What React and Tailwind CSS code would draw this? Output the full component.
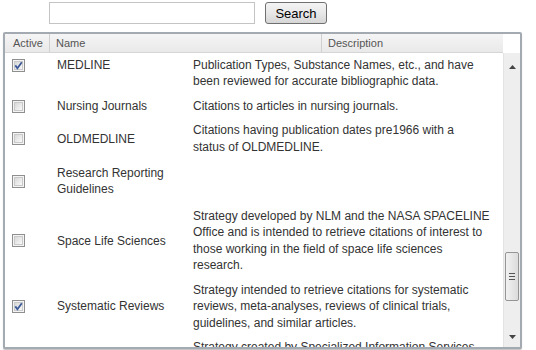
import React from "react";

const rows = [
  {
    name: ["MEDLINE"],
    checked: true,
    desc: [
      "Citations that have been indexed with MeSH",
      "Publication Types, Substance Names, etc., and have",
      "been reviewed for accurate bibliographic data.",
    ],
  },
  { name: ["Nursing Journals"], checked: false, desc: ["Citations to articles in nursing journals."] },
  {
    name: ["OLDMEDLINE"],
    checked: false,
    desc: ["Citations having publication dates pre1966 with a", "status of OLDMEDLINE."],
  },
  { name: ["Research Reporting", "Guidelines"], checked: false, desc: [], tall: true },
  {
    name: ["Space Life Sciences"],
    checked: false,
    desc: [
      "Strategy developed by NLM and the NASA SPACELINE",
      "Office and is intended to retrieve citations of interest to",
      "those working in the field of space life sciences",
      "research.",
    ],
  },
  {
    name: ["Systematic Reviews"],
    checked: true,
    desc: [
      "Strategy intended to retrieve citations for systematic",
      "reviews, meta-analyses, reviews of clinical trials,",
      "guidelines, and similar articles.",
    ],
  },
  {
    name: ["Toxicology"],
    checked: false,
    desc: [
      "Strategy created by Specialized Information Services",
      "to retrieve citations from the toxicology",
      "literature.",
    ],
  },
];

function Checkbox({ checked }) {
  return (
    <svg width="13" height="13" viewBox="0 0 13 13">
      <defs>
        <linearGradient id="cbg" x1="0" y1="0" x2="1" y2="1">
          <stop offset="0" stopColor="#d6d6d6" />
          <stop offset="1" stopColor="#fbfbfb" />
        </linearGradient>
      </defs>
      <rect x="0.5" y="0.5" width="12" height="12" fill="#f4f4f4" stroke="#8f8f8f" />
      <rect x="2.5" y="2.5" width="8" height="8" fill="url(#cbg)" stroke="#c9c9c9" />
      {checked && (
        <path d="M3.3 6.4 L5.4 9.2 L9.8 3.2" fill="none" stroke="#3d5a98" strokeWidth="1.8" />
      )}
    </svg>
  );
}

export default function App() {
  return (
    <div className="w-[536px] h-[350px] bg-white overflow-hidden font-['Liberation_Sans',Arial,sans-serif] text-[#333]">
      <div className="flex items-start pt-[2px] pl-[49px]">
        <div className="w-[206px] h-[22px] border border-[#c4c4c4] bg-white" />
        <button className="ml-[10px] w-[62px] h-[22px] rounded-[3px] border border-[#707070] bg-gradient-to-b from-[#f4f4f4] via-[#e8e8e8] to-[#d6d6d6] text-[13px] text-black leading-none">
          Search
        </button>
      </div>

      <div className="mt-[8px] ml-[3px] w-[519px] h-[317px] border-2 border-[#a4aab1] rounded-[2px] flex flex-col bg-white shadow-[0_1px_1px_rgba(0,0,0,0.25)]">
        <div className="flex h-[19px] shrink-0">
          <div className="w-[498px] flex bg-gradient-to-b from-[#f5f5f5] to-[#e9e9e9] border-b border-[#d5d5d5] text-[11px] text-[#555] leading-[18px]">
            <div className="w-[45px] pl-[8px] border-r border-[#d0d0d0]">Active</div>
            <div className="w-[272px] pl-[6px] border-r border-[#d0d0d0]">Name</div>
            <div className="flex-1 pl-[6px]">Description</div>
          </div>
          <div className="flex-1 bg-white" />
        </div>

        <div className="flex flex-1 min-h-0">
          <div className="w-[498px] overflow-hidden text-[12px] leading-[16.5px]">
            <div className="-mt-[16.75px]">
              {rows.map((r, i) => (
                <div
                  key={i}
                  className={`grid grid-cols-[45px_136px_1fr] items-center ${r.tall ? "pt-[5.5px] pb-[6px]" : "py-[4px]"}`}
                >
                  <div className="pl-[7px] flex items-center">
                    <Checkbox checked={r.checked} />
                  </div>
                  <div className="pl-[7px]">
                    {r.name.map((n, j) => (
                      <div key={j} className="whitespace-nowrap">{n}</div>
                    ))}
                  </div>
                  <div className="pl-[7px]">
                    {r.desc.map((d, j) => (
                      <div key={j} className="whitespace-nowrap">{d}</div>
                    ))}
                  </div>
                </div>
              ))}
            </div>
          </div>

          <div className="w-[17px] flex flex-col bg-[#eeeeee] border-l border-[#e3e3e3]">
            <div className="h-[18px] flex items-end justify-center pb-[2px]">
              <svg width="7" height="4" viewBox="0 0 7 4"><path d="M0 4 L3.5 0 L7 4 Z" fill="#444" /></svg>
            </div>
            <div className="flex-1 flex flex-col">
              <div className="mt-[181px] mx-[1px] h-[49px] rounded-[2px] border border-[#959595] bg-gradient-to-r from-[#f1f1f1] to-[#dcdcdc] flex flex-col items-center justify-center gap-[2px]">
                <div className="w-[6px] h-[1px] bg-[#555]" />
                <div className="w-[6px] h-[1px] bg-[#555]" />
                <div className="w-[6px] h-[1px] bg-[#555]" />
              </div>
            </div>
            <div className="h-[18px] flex items-start justify-center pt-[6px]">
              <svg width="7" height="4" viewBox="0 0 7 4"><path d="M0 0 L7 0 L3.5 4 Z" fill="#444" /></svg>
            </div>
          </div>
        </div>
      </div>
    </div>
  );
}
